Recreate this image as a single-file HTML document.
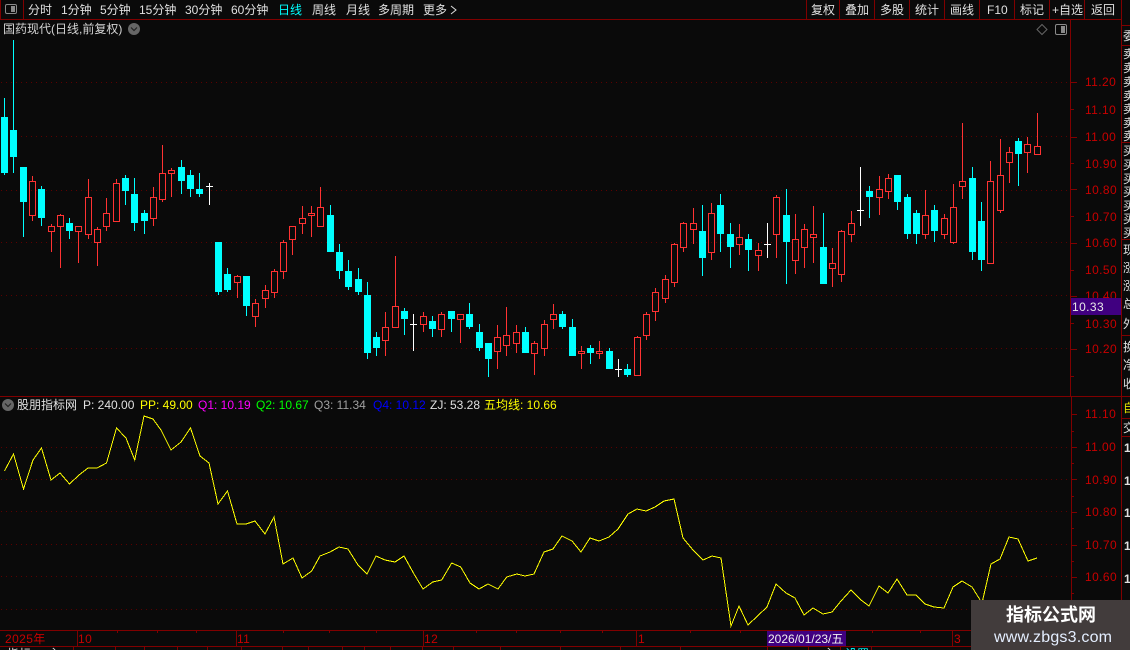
<!DOCTYPE html>
<html><head><meta charset="utf-8"><style>
html,body{margin:0;padding:0;background:#0a0a0a;width:1130px;height:650px;overflow:hidden}
svg{display:block;position:absolute;left:0;top:0}
text{font-family:"Liberation Sans","WenQuanYi Zen Hei","Noto Sans CJK SC",sans-serif;font-size:12px}
.ax text{letter-spacing:.4px}
</style></head><body>
<svg width="1130" height="650" viewBox="0 0 1130 650">
<rect width="1130" height="650" fill="#0a0a0a"/>
<!-- grid -->
<g stroke="#5c0000" stroke-dasharray="1 4" fill="none">
<path d="M1 82.5H1068M1 136.5H1068M1 190.5H1068M1 242.5H1068M1 295.5H1068M1 348.5H1068"/>
<path d="M1 447.5H1070M1 479.5H1070M1 511.5H1070M1 544.5H1070M1 576.5H1070M1 609.5H1070"/>
</g>
<!-- frame lines -->
<g stroke="#800000" fill="none" shape-rendering="crispEdges">
<path d="M0 19.5H1121M0.5 0V19M23.5 0V19M806.5 0V19M839.5 0V19M874.5 0V19M909.5 0V19M944.5 0V19M979.5 0V19M1014.5 0V19M1049.5 0V19M1084.5 0V19"/>
<path d="M1070.5 19V396M1071.5 397V630M1121.5 0V650"/>
<path d="M0 396.5H1130M0 630.5H1121M0 646.5H1121"/>
<path d="M1121 25.5H1130M1121 45.5H1130M1121 142.5H1130M1121 239.5H1130M1121 335.5H1130M1121 418.5H1130M1121 436.5H1130"/>
<path d="M1071 82.5H1077M1071 109.5H1074M1071 137.5H1077M1071 163.5H1074M1071 189.5H1077M1071 216.5H1074M1071 243.5H1077M1071 270.5H1074M1071 296.5H1077M1071 323.5H1074M1071 349.5H1077M1071 376.5H1074"/>
<path d="M1071 414.5H1077M1071 431.5H1074M1071 447.5H1077M1071 463.5H1074M1071 479.5H1077M1071 496.5H1074M1071 512.5H1077M1071 528.5H1074M1071 545.5H1077M1071 561.5H1074M1071 577.5H1077M1071 593.5H1074M1071 609.5H1077"/>
<path d="M77.5 631V646M236.5 631V646M423.5 631V646M636.5 631V646M952.5 631V646"/>
<path d="M117.5 631V633M157.5 631V633M196.5 631V633M283.5 631V633M329.5 631V633M376.5 631V633M476.5 631V633M516.5 631V633M560.5 631V633M602.5 631V633M690.5 631V633M740.5 631V633M872.5 631V633M920.5 631V633"/>
<path d="M73.5 647V650M115.5 647V650M144.5 647V650M177.5 647V650M207.5 647V650M241.5 647V650M282.5 647V650M308.5 647V650M342.5 647V650M364.5 647V650M390.5 647V650M422.5 647V650M453.5 647V650M500.5 647V650M560.5 647V650M620.5 647V650M680.5 647V650M767.5 647V650M808.5 647V650M840.5 647V650M871.5 647V650"/>
</g>
<!-- top icon -->
<rect x="5.5" y="4.5" width="11" height="9" rx="1.5" fill="none" stroke="#8a8a8a"/>
<rect x="11" y="6" width="4" height="6" fill="#8a8a8a"/>
<rect x="1055.5" y="24.5" width="11" height="10" rx="1.5" fill="none" stroke="#8a8a8a"/>
<rect x="1061" y="26" width="4" height="7" fill="#8a8a8a"/>
<path d="M1042 24.5L1047 29.5L1042 34.5L1037 29.5Z" fill="none" stroke="#666"/>
<circle cx="134" cy="29" r="6" fill="#666"/>
<path d="M131 27.5L134 30.5L137 27.5" fill="none" stroke="#222" stroke-width="1.2"/>
<circle cx="8" cy="405" r="6" fill="#666"/>
<path d="M5 403.5L8 406.5L11 403.5" fill="none" stroke="#222" stroke-width="1.2"/>
<!-- menu -->
<g fill="#e0e0e0">
<text x="28" y="14">分时</text><text x="61" y="14">1分钟</text><text x="100" y="14">5分钟</text><text x="139" y="14">15分钟</text><text x="185" y="14">30分钟</text><text x="231" y="14">60分钟</text>
<text x="278" y="14" fill="#00ffff">日线</text><text x="312" y="14">周线</text><text x="346" y="14">月线</text><text x="378" y="14">多周期</text><text x="423" y="14">更多</text>
<text x="811" y="14">复权</text><text x="845" y="14">叠加</text><text x="880" y="14">多股</text><text x="915" y="14">统计</text><text x="950" y="14">画线</text><text x="987" y="14">F10</text><text x="1020" y="14">标记</text><text x="1052" y="14">+自选</text><text x="1091" y="14">返回</text>
<text x="3" y="33" fill="#d4d4d4">国药现代(日线,前复权)</text>
</g>
<path d="M451 6L456 10L451 14" fill="none" stroke="#ddd"/>
<!-- cyan candles -->
<path fill="none" stroke="#00ffff" shape-rendering="crispEdges" d="M4.5 98V175M13.5 40V173M23.5 167V237M41.5 186V226M69.5 218V239M125.5 175V205M134.5 178V231M144.5 210V234M181.5 160V194M190.5 170V197M199.5 173V197M218.5 242V295M227.5 268V292M246.5 276V316M330.5 205V252M339.5 244V279M348.5 260V290M358.5 268V295M367.5 282V359M376.5 332V356M404.5 308V335M432.5 316V337M451.5 311V332M469.5 303V329M479.5 324V351M488.5 343V377M525.5 327V353M562.5 311V329M572.5 319V356M590.5 345V364M609.5 348V369M627.5 364V377M702.5 205V276M720.5 194V252M730.5 223V268M748.5 234V271M786.5 189V284M823.5 213V284M869.5 186V218M897.5 175V210M907.5 194V239M916.5 210V244M934.5 205V242M972.5 167V260M981.5 202V271M1018.5 138V186"/>
<path fill="#00ffff" shape-rendering="crispEdges" d="M1 117h7v56h-7zM10 130h7v27h-7zM20 167h7v35h-7zM38 189h7v29h-7zM66 223h7v8h-7zM122 178h7v13h-7zM131 194h7v29h-7zM141 213h7v8h-7zM178 167h7v14h-7zM187 175h7v14h-7zM196 189h7v5h-7zM215 242h7v50h-7zM224 274h7v16h-7zM243 276h7v30h-7zM327 215h7v37h-7zM336 252h7v19h-7zM345 271h7v16h-7zM355 279h7v13h-7zM364 295h7v58h-7zM373 337h7v11h-7zM401 311h7v8h-7zM429 321h7v8h-7zM448 311h7v8h-7zM466 314h7v13h-7zM476 332h7v16h-7zM485 343h7v16h-7zM522 332h7v21h-7zM559 314h7v13h-7zM569 327h7v29h-7zM587 348h7v5h-7zM606 351h7v18h-7zM624 369h7v6h-7zM699 231h7v27h-7zM717 205h7v29h-7zM727 234h7v13h-7zM745 239h7v11h-7zM783 215h7v27h-7zM820 247h7v37h-7zM866 191h7v6h-7zM894 175h7v27h-7zM904 197h7v37h-7zM913 213h7v21h-7zM931 210h7v21h-7zM969 178h7v74h-7zM978 221h7v39h-7zM1015 141h7v13h-7z"/>
<!-- red candles -->
<path fill="none" stroke="#ff3232" shape-rendering="crispEdges" d="
M29.5 181.5h6v34h-6zM32.5 176V181M32.5 216V221
M48.5 226.5h6v5h-6zM51.5 224V226M51.5 232V252
M57.5 215.5h6v11h-6zM60.5 214V215M60.5 227V268
M75.5 226.5h6v5h-6zM78.5 232V263
M85.5 197.5h6v37h-6zM88.5 179V197M88.5 235V239
M94.5 229.5h6v13h-6zM97.5 227V229M97.5 243V266
M103.5 213.5h6v13h-6zM106.5 198V213M106.5 227V231
M113.5 183.5h6v38h-6zM116.5 179V183
M150.5 197.5h6v21h-6zM153.5 187V197M153.5 219V226
M159.5 173.5h6v26h-6zM162.5 145V173M162.5 200V202
M168.5 170.5h6v3h-6zM171.5 168V170M171.5 174V197
M234.5 276.5h6v6h-6zM237.5 275V276M237.5 283V298
M252.5 303.5h6v13h-6zM255.5 299V303M255.5 317V327
M262.5 290.5h6v8h-6zM265.5 285V290M265.5 299V308
M271.5 271.5h6v21h-6zM274.5 269V271M274.5 293V298
M280.5 242.5h6v29h-6zM283.5 240V242M283.5 272V279
M289.5 226.5h6v13h-6zM292.5 240V255
M299.5 218.5h6v5h-6zM302.5 206V218M302.5 224V234
M308.5 213.5h6v2h-6zM311.5 206V213M311.5 216V237
M317.5 207.5h6v19h-6zM320.5 187V207
M382.5 327.5h6v13h-6zM385.5 312V327M385.5 341V356
M392.5 306.5h6v21h-6zM395.5 256V306
M420.5 316.5h6v8h-6zM423.5 312V316M423.5 325V332
M438.5 314.5h6v15h-6zM441.5 312V314M441.5 330V337
M457.5 314.5h6v5h-6zM460.5 320V343
M494.5 337.5h6v14h-6zM497.5 325V337M497.5 352V369
M503.5 335.5h6v10h-6zM506.5 307V335M506.5 346V356
M513.5 332.5h6v11h-6zM516.5 325V332M516.5 344V353
M531.5 343.5h6v10h-6zM534.5 341V343M534.5 354V375
M541.5 324.5h6v24h-6zM544.5 320V324M544.5 349V356
M550.5 314.5h6v5h-6zM553.5 304V314M553.5 320V329
M578.5 351.5h6v2h-6zM581.5 346V351M581.5 354V369
M596.5 351.5h6v2h-6zM599.5 341V351M599.5 354V359
M634.5 337.5h6v38h-6zM637.5 336V337
M643.5 314.5h6v21h-6zM646.5 312V314M646.5 336V340
M652.5 292.5h6v19h-6zM655.5 288V292M655.5 312V321
M662.5 279.5h6v19h-6zM665.5 275V279M665.5 299V303
M671.5 244.5h6v38h-6zM674.5 243V244M674.5 283V287
M680.5 223.5h6v24h-6zM683.5 222V223M683.5 248V252
M690.5 223.5h6v6h-6zM693.5 208V223M693.5 230V244
M708.5 213.5h6v39h-6zM711.5 203V213M711.5 253V260
M736.5 237.5h6v7h-6zM739.5 224V237M739.5 245V255
M755.5 250.5h6v5h-6zM758.5 243V250M758.5 256V271
M773.5 197.5h6v37h-6zM776.5 195V197M776.5 235V258
M792.5 239.5h6v21h-6zM795.5 214V239M795.5 261V274
M801.5 229.5h6v18h-6zM804.5 224V229M804.5 248V268
M810.5 234.5h6v3h-6zM813.5 206V234M813.5 238V263
M829.5 263.5h6v5h-6zM832.5 248V263M832.5 269V287
M838.5 231.5h6v43h-6zM841.5 230V231M841.5 275V282
M848.5 223.5h6v11h-6zM851.5 211V223M851.5 235V242
M876.5 189.5h6v8h-6zM879.5 176V189M879.5 198V215
M885.5 178.5h6v13h-6zM888.5 174V178M888.5 192V199
M922.5 215.5h6v19h-6zM925.5 190V215M925.5 235V239
M941.5 218.5h6v16h-6zM944.5 214V218M944.5 235V239
M950.5 207.5h6v35h-6zM953.5 184V207M953.5 243V244
M959.5 181.5h6v5h-6zM962.5 123V181M962.5 187V199
M987.5 181.5h6v82h-6zM990.5 161V181
M997.5 175.5h6v35h-6zM1000.5 139V175M1000.5 211V213
M1006.5 152.5h6v10h-6zM1009.5 147V152M1009.5 163V183
M1024.5 144.5h6v8h-6zM1027.5 137V144M1027.5 153V173
M1034.5 146.5h6v8h-6zM1037.5 113V146"/>
<!-- white crosses -->
<path fill="none" stroke="#ffffff" shape-rendering="crispEdges" d="M209.5 183V205M206 186.5H213M413.5 314V351M410 324.5H417M618.5 359V377M615 369.5H622M767.5 223V258M764 244.5H771M860.5 167V226M857 210.5H864"/>
<!-- yellow line -->
<polyline fill="none" stroke="#ffff00" stroke-width="1" shape-rendering="crispEdges" points="4.5,471 13.5,454 23.5,489 33,460 41.5,448 51,480 60,473 69.5,484 79,475 88,468 97,468 106.5,463 116.5,428 126,438 134.7,460 144,416 153,419 161,430 171,450 181,442 190.5,428 200,456 209,463 218,504 227.5,491 237,524 246,524 255,521 265,534 274,517 283,564 293,558 302,578 311.7,571 320,556 330,552 339,547 348,549 358,565 367,574 376,556 385,560 395,562 404,556 414,574 423,589 432.7,582 441.7,580 451.7,563 460.7,567 470,583 479,589 488,584 498,589 506.7,577 516.7,574 525,576 534,574 544,552 553,549 562,536 572,541 581,552 590,538 599,541 609,537 618,529 628,514 637,509 646,511 655,507 664,501 674,499 683,538 693,550 703,560 712,556 721,558 731,626 739,606 748,625 767,607 776,584 786,593 795,598 804,615 813,608 823,614 832,612 841,601 851,590 861,600 869,606 879,586 888,593 897,579 907,595 916,595 925,604 934,607 944,608 953,587 962,581 972,587 982,603 991,564 1000,559 1009,537 1018,539 1028,561 1037,558"/>
<!-- sub labels -->
<text x="17" y="409" fill="#e0e0e0">股朋指标网</text>
<text x="83" y="409" fill="#e0e0e0">P: 240.00</text>
<text x="140" y="409" fill="#ffff00">PP: 49.00</text>
<text x="198" y="409" fill="#ff00ff">Q1: 10.19</text>
<text x="256" y="409" fill="#00ff00">Q2: 10.67</text>
<text x="314" y="409" fill="#a0a0a0">Q3: 11.34</text>
<text x="373" y="409" fill="#0000ff">Q4: 10.12</text>
<text x="430" y="409" fill="#e0e0e0">ZJ: 53.28</text>
<text x="484" y="409" fill="#ffff00">五均线: 10.66</text>
<!-- axis labels -->
<g fill="#c80000" class="ax">
<text x="1085" y="86">11.20</text><text x="1085" y="114">11.10</text><text x="1085" y="141">11.00</text><text x="1085" y="168">10.90</text><text x="1085" y="194">10.80</text><text x="1085" y="221">10.70</text><text x="1085" y="247">10.60</text><text x="1085" y="274">10.50</text><text x="1085" y="300">10.40</text><text x="1085" y="328">10.30</text><text x="1085" y="353">10.20</text>
<text x="1085" y="418">11.10</text><text x="1085" y="451">11.00</text><text x="1085" y="484">10.90</text><text x="1085" y="516">10.80</text><text x="1085" y="549">10.70</text><text x="1085" y="581">10.60</text>
<text x="5" y="643">2025年</text><text x="78" y="643">10</text><text x="237" y="643">11</text><text x="424" y="643">12</text><text x="638" y="643">1</text><text x="954" y="643">3</text>
</g>
<!-- price box -->
<rect x="1071" y="298" width="50" height="17" fill="#400080"/>
<text x="1072" y="311" fill="#e8e8e8" style="letter-spacing:.4px">10.33</text>
<rect x="767" y="631" width="79" height="15" fill="#400080"/>
<text x="768" y="643" fill="#f0f0f0">2026/01/23/五</text>
<!-- clipped bottom row text -->
<text x="7" y="658" fill="#e0e0e0">指标</text>
<text x="48" y="658" fill="#e0e0e0">主</text>
<text x="823" y="658" fill="#e0e0e0">主</text>
<text x="845" y="658" fill="#00ffff">设置</text>
<!-- right column -->
<g fill="#e0e0e0">
<text x="1123" y="40">委</text>
<text x="1123" y="58">卖</text><text x="1123" y="72">卖</text><text x="1123" y="86">卖</text><text x="1123" y="100">卖</text><text x="1123" y="113">卖</text><text x="1123" y="127">卖</text><text x="1123" y="140">卖</text>
<text x="1123" y="155">买</text><text x="1123" y="169">买</text><text x="1123" y="183">买</text><text x="1123" y="196">买</text><text x="1123" y="210">买</text><text x="1123" y="223">买</text><text x="1123" y="237">买</text>
<text x="1123" y="254">现</text><text x="1123" y="272">涨</text><text x="1123" y="290">涨</text><text x="1123" y="308">总</text><text x="1123" y="328">外</text>
<text x="1123" y="351">换</text><text x="1123" y="369">净</text><text x="1123" y="388">收</text>
<text x="1123" y="412" fill="#e0e000">自</text>
<text x="1123" y="432">交</text>
<text x="1124" y="452" font-weight="bold">1</text><text x="1124" y="485" font-weight="bold">1</text><text x="1124" y="517" font-weight="bold">1</text><text x="1124" y="550" font-weight="bold">1</text><text x="1124" y="583" font-weight="bold">1</text>
</g>
<!-- watermark -->
<rect x="971" y="600" width="159" height="50" fill="#423c3c"/>
<text x="1006" y="621" fill="#ffffff" font-weight="bold" style="font-size:18px">指标公式网</text>
<text x="994" y="642" fill="#e4eeff" style="font-size:16px;letter-spacing:.2px">www.zbgs3.com</text>
</svg>
</body></html>
